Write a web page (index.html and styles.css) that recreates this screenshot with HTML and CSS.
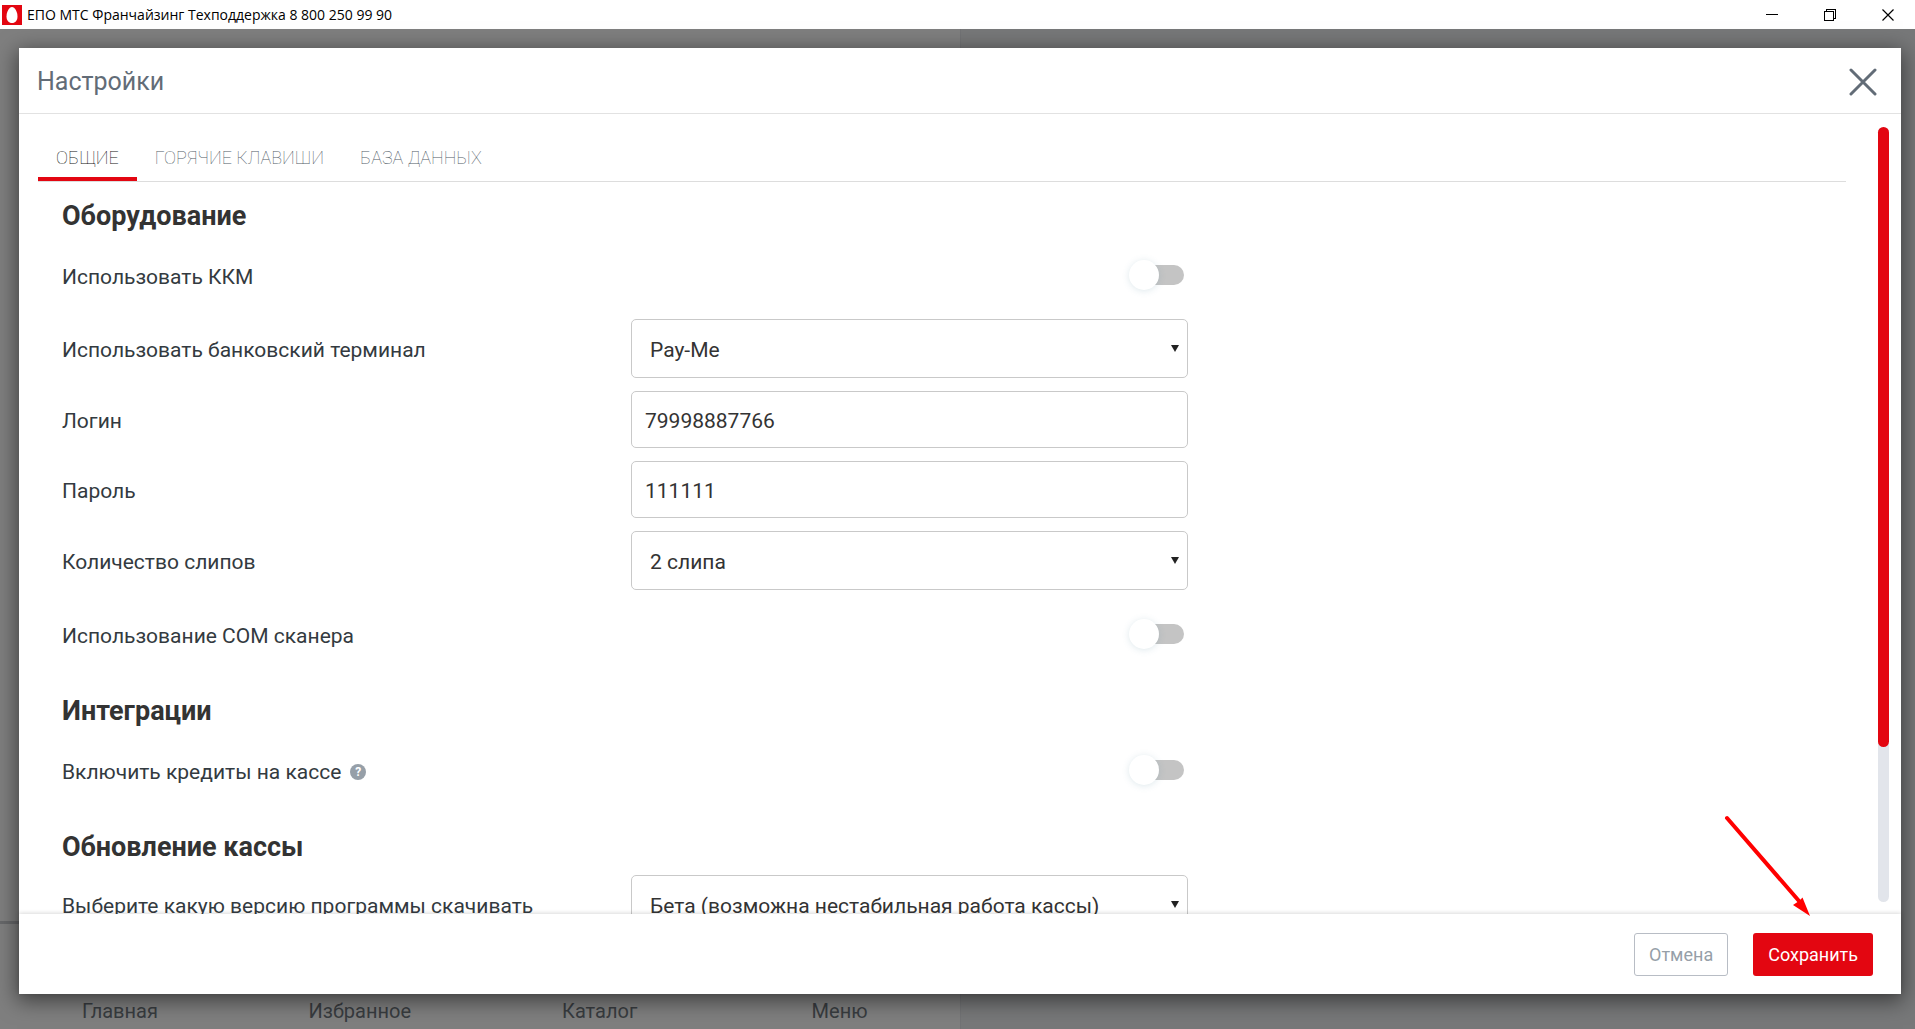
FILE: index.html
```html
<!DOCTYPE html>
<html lang="ru">
<head>
<meta charset="utf-8">
<title>ЕПО МТС Франчайзинг</title>
<link rel="stylesheet" href="styles.css">
</head>
<body>
<div class="window">
  <header class="titlebar">
    <svg class="titlebar-logo" width="20" height="20" viewBox="0 0 20 20" aria-hidden="true"><rect width="20" height="20" fill="#e30611"/><path d="M10 2C12.800 2 15.500 7 15.500 11.500C15.500 15.500 13.300 18 10 18S4.500 15.500 4.500 11.500C4.500 7 7.200 2 10 2Z" fill="#fff"/></svg>
    <span class="titlebar-text">ЕПО МТС Франчайзинг Техподдержка 8 800 250 99 90</span>
    <div class="titlebar-controls">
      <button class="win-btn" type="button" aria-label="Свернуть"><svg width="12" height="12" viewBox="0 0 12 12" shape-rendering="crispEdges"><path d="M0 5.500H12" stroke="#000"/></svg></button>
      <button class="win-btn" type="button" aria-label="Развернуть"><svg width="12" height="12" viewBox="0 0 12 12" fill="none" stroke="#000" shape-rendering="crispEdges"><rect x=".5" y="2.500" width="9" height="9"/><path d="M2.500 2.500V.5H11.500V9.500H9.500"/></svg></button>
      <button class="win-btn" type="button" aria-label="Закрыть окно"><svg width="12" height="12" viewBox="0 0 12 12"><path d="M.5 .5L11.500 11.500M11.500 .5L.5 11.500" stroke="#000" stroke-width="1.200"/></svg></button>
    </div>
  </header>
  <main class="app">
    <div class="workspace">
      <nav class="bottom-nav">
        <a href="#">Главная</a><a href="#">Избранное</a><a href="#">Каталог</a><a href="#">Меню</a>
      </nav>
    </div>
    <aside class="receipt"></aside>
    <section class="modal" role="dialog" aria-labelledby="modal-title">
      <header class="modal-header">
        <h1 class="modal-title" id="modal-title">Настройки</h1>
        <button class="modal-close" type="button" aria-label="Закрыть"><svg width="28" height="28" viewBox="0 0 28 28"><path d="M2 2L26 26M26 2L2 26" stroke="#626c77" stroke-width="3" stroke-linecap="round"/></svg></button>
      </header>
      <div class="modal-body">
        <div class="modal-content">
          <div class="tabs" role="tablist">
            <button class="tab tab-active" type="button" role="tab" aria-selected="true">ОБЩИЕ</button>
            <button class="tab" type="button" role="tab">ГОРЯЧИЕ КЛАВИШИ</button>
            <button class="tab" type="button" role="tab">БАЗА ДАННЫХ</button>
          </div>
          <form class="settings">
            <h2>Оборудование</h2>
            <div class="row row-toggle"><label for="kkm">Использовать ККМ</label><input class="toggle" type="checkbox" id="kkm"></div>
            <div class="row"><label for="terminal">Использовать банковский терминал</label><div class="select"><select id="terminal"><option>Pay-Me</option></select></div></div>
            <div class="row"><label for="login">Логин</label><input class="field" type="text" id="login" value="79998887766"></div>
            <div class="row"><label for="password">Пароль</label><input class="field" type="text" id="password" value="111111"></div>
            <div class="row"><label for="slips">Количество слипов</label><div class="select"><select id="slips"><option>2 слипа</option></select></div></div>
            <div class="row row-toggle"><label for="scanner">Использование COM сканера</label><input class="toggle" type="checkbox" id="scanner"></div>
            <h2>Интеграции</h2>
            <div class="row row-toggle"><label for="credits">Включить кредиты на кассе<span class="help">?</span></label><input class="toggle" type="checkbox" id="credits"></div>
            <h2>Обновление кассы</h2>
            <div class="row"><label for="channel">Выберите какую версию программы скачивать</label><div class="select"><select id="channel"><option>Бета (возможна нестабильная работа кассы)</option></select></div></div>
          </form>
        </div>
        <div class="scrollbar"><div class="scrollbar-thumb"></div></div>
      </div>
      <footer class="modal-footer">
        <button class="btn btn-outline" type="button">Отмена</button>
        <button class="btn btn-primary" type="button">Сохранить</button>
        <svg class="pointer" width="90" height="104" viewBox="0 0 90 104" aria-hidden="true"><path d="M4 4L76 87" stroke="#f00" stroke-width="4" stroke-linecap="round"/><path d="M87 102L70 91L76 87L79.500 83.500Z" fill="#f00"/></svg>
      </footer>
    </section>
  </main>
</div>
</body>
</html>
```
FILE: styles.css
```css
* { box-sizing: border-box; }
body { margin: 0; font-family: Roboto, "Liberation Sans", sans-serif; color: #333; }
button { border: 0; background: none; padding: 0; font-family: inherit; }

.window { display: flex; flex-direction: column; height: 100vh; overflow: hidden; }
.titlebar { flex: none; display: flex; align-items: center; height: 29px; padding-left: 2px; background: #fff; }
.titlebar-text { flex: 1; margin-left: 5px; font: 14px "Open Sans", "Noto Sans", sans-serif; color: #000; white-space: nowrap; }
.titlebar-controls { display: flex; margin-right: -2px; }
.win-btn { display: grid; place-items: center; width: 58px; height: 28px; }

.app { position: relative; flex: 1; display: flex; background: #7f7f7f; }
.workspace { flex: 960 0 0; display: flex; flex-direction: column; justify-content: flex-end; border-right: 1px solid #727375; }
.receipt { flex: 955 0 0; background: #777879; }
.bottom-nav { display: grid; grid-template-columns: repeat(4, 1fr); height: 108px; padding-bottom: 6px; align-items: end; border-top: 3px solid #67686a; text-align: center; }
.bottom-nav a { font-size: 20px; line-height: 24px; color: #383c40; text-decoration: none; }

.modal { position: absolute; inset: 19px 14px 35px 19px; display: flex; flex-direction: column; background: #fff; box-shadow: 0 5px 20px 2px rgba(0, 0, 0, .5); }
.modal-header { flex: none; display: flex; align-items: center; justify-content: space-between; height: 66px; padding: 2px 24px 0 18px; border-bottom: 1px solid #e2e2e2; }
.modal-title { margin: 0; font-size: 25px; font-weight: 400; color: #626c77; }
.modal-close { display: flex; }
.modal-body { flex: 1; min-height: 0; display: flex; padding: 0 12px 0 19px; overflow: hidden; }
.modal-content { flex: 1; overflow: hidden; }
.scrollbar { flex: none; width: 11px; margin: 13px 0 12px 32px; border-radius: 6px; background: #e2e5eb; }
.scrollbar-thumb { height: 80%; border-radius: 6px; background: #e30611; }

.tabs { display: flex; height: 68px; align-items: flex-end; border-bottom: 1px solid #ddd; }
.tab { height: 50px; padding: 6px 18px 0; border-bottom: 4px solid transparent; font-size: 18px; font-weight: 100; color: #505a65; }
.tab-active { color: #111; border-bottom-color: #e30611; }

.settings { display: flex; flex-direction: column; gap: 13px; padding: 1px 0 0 24px; }
.settings h2 { margin: 0; padding-top: 18px; font-size: 27px; line-height: 30px; font-weight: 700; }
.row { display: grid; grid-template-columns: 569fr 557fr 658fr; align-items: center; }
.row label { display: flex; align-items: center; padding-top: 3px; font-size: 21px; line-height: 26px; color: #333a40; white-space: nowrap; }
.row-toggle { height: 62px; }
.help { display: grid; place-items: center; width: 16px; height: 16px; margin-left: 9px; border-radius: 50%; background: #969fa8; color: #fff; font-size: 12px; line-height: 16px; font-weight: 700; }

.field, select { width: 100%; border: 1px solid #c9c9c9; border-radius: 5px; background: #fff; font: 21px Roboto, "Liberation Sans", sans-serif; color: #333; }
.field { height: 57px; padding: 2px 13px 0; }
.select { position: relative; }
select { display: block; height: 59px; padding: 2px 18px 0; appearance: none; }
.select::after { content: ""; position: absolute; right: 9px; top: 26px; border: 4px solid transparent; border-top: 7px solid #222; border-bottom: 0; }

.toggle { appearance: none; justify-self: end; display: flex; align-items: center; width: 50px; height: 20px; margin: 0 4px 0 0; border-radius: 10px; background: #c4c4c4; }
.toggle::before { content: ""; flex: none; width: 30px; height: 30px; margin-left: -5px; border-radius: 50%; background: #fff; box-shadow: 0 1px 7px rgba(90, 140, 160, .2); }

.modal-footer { position: relative; flex: none; display: flex; align-items: center; justify-content: flex-end; gap: 25px; height: 80px; padding: 0 28px 0 0; background: #fff; box-shadow: 0 -1px 4px rgba(0, 0, 0, .15); }
.btn { height: 43px; padding: 0 14px; border: 1px solid transparent; border-radius: 3px; font-size: 18px; }
.btn-outline { border-color: #b8bdc5; color: #969fa8; }
.btn-primary { background: #e30611; color: #fff; }
.pointer { position: absolute; right: 88px; top: -100px; pointer-events: none; }
```
